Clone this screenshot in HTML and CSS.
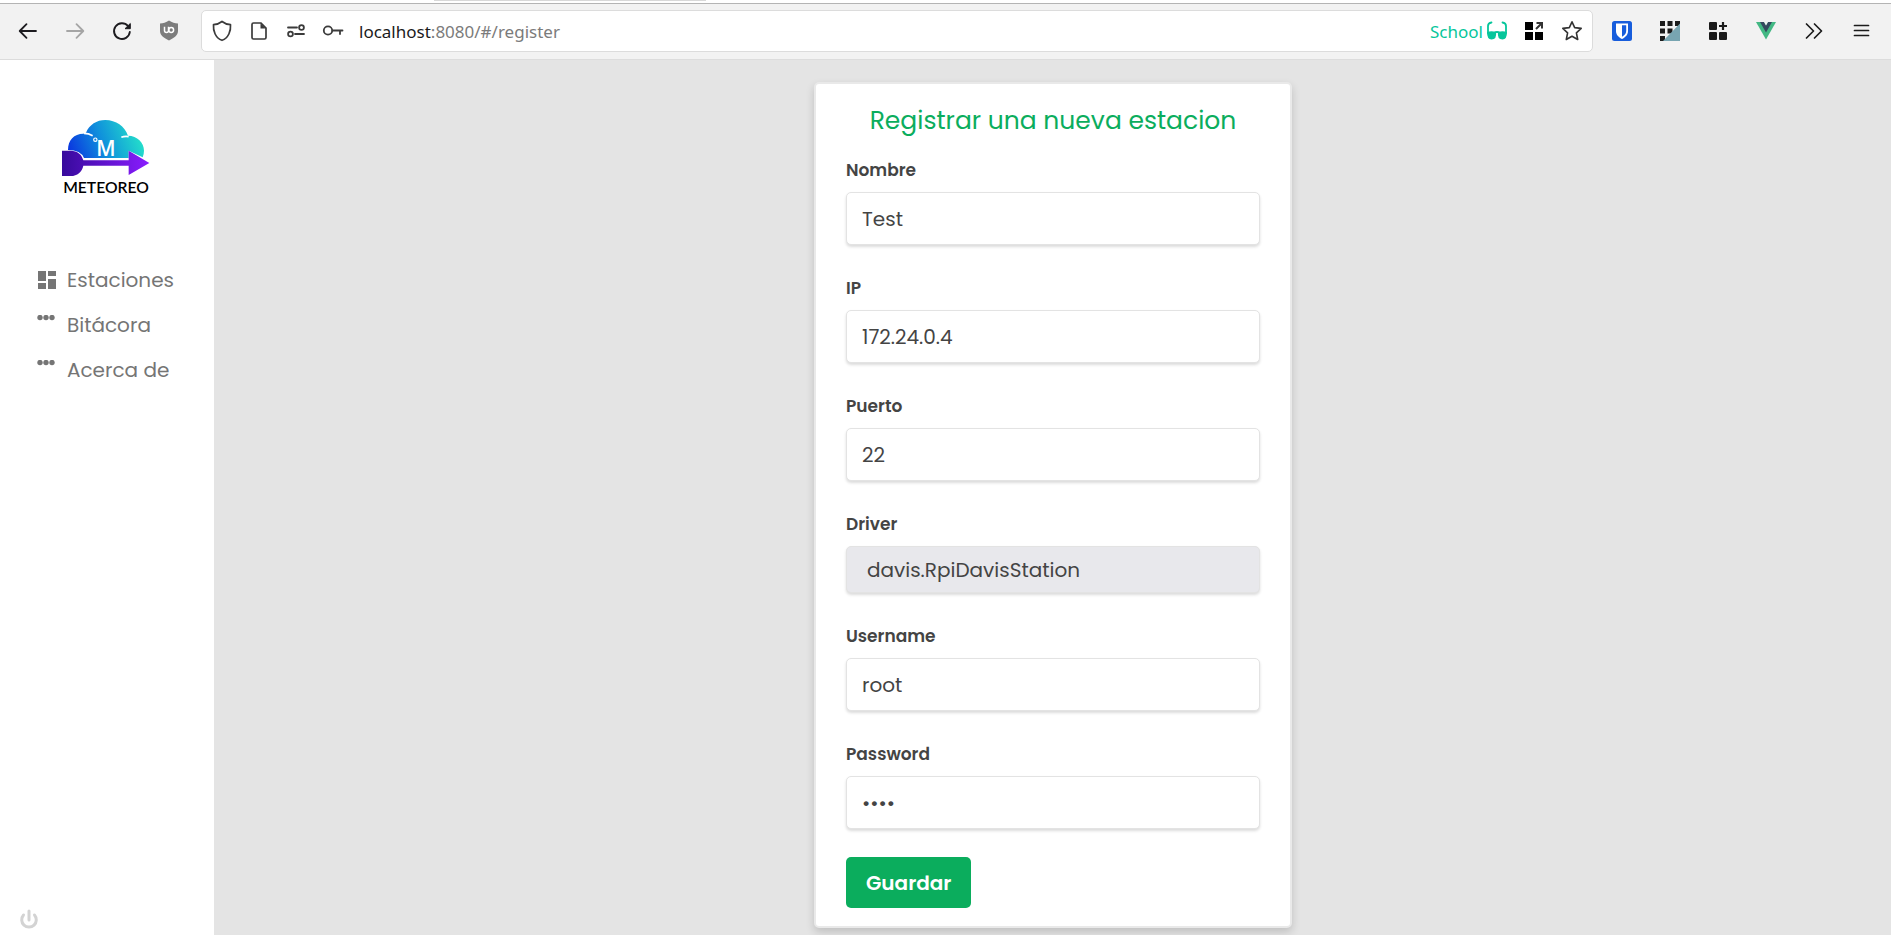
FILE: index.html
```html
<!DOCTYPE html>
<html lang="es">
<head>
<meta charset="utf-8">
<title>Meteoreo - Registrar estacion</title>
<link rel="stylesheet" href="styles.css">
</head>
<body>
<header class="browser">
  <div class="tabstrip"><span class="tab"></span></div>
  <div class="toolbar">
    <div class="nav-buttons">
      <button class="tool" aria-label="Back"><svg viewBox="0 0 24 24"><path d="M20 12H4M10.500 5.200L3.700 12L10.500 18.800" fill="none" stroke="#1c1b1f" stroke-width="1.800" stroke-linecap="round" stroke-linejoin="round"/></svg></button>
      <button class="tool" aria-label="Forward"><svg viewBox="0 0 24 24"><path d="M4 12H20M13.500 5.200L20.300 12L13.500 18.800" fill="none" stroke="#a5a5a5" stroke-width="1.800" stroke-linecap="round" stroke-linejoin="round"/></svg></button>
      <button class="tool" aria-label="Reload"><svg viewBox="0 0 24 24"><path d="M18 7A7.900 7.900 0 1 0 19.800 13" fill="none" stroke="#1c1b1f" stroke-width="1.900" stroke-linecap="round"/><path d="M20.300 4.500V9.700H15Z" fill="#1c1b1f" stroke="#1c1b1f" stroke-linejoin="round"/></svg></button>
      <button class="tool" aria-label="uBlock"><svg viewBox="0 0 24 24"><path d="M12 1.500C9 3.500 6 4.500 3 4.500V12C3 16.500 7 19 12 21.500C17 19 21 16.500 21 12V4.500C18 4.500 15 3.500 12 1.500Z" fill="#7d7d7d"/><path d="M7.500 7.800V11.500A2 2 0 0 0 11.500 11.500V7.800" fill="none" stroke="#fff" stroke-width="1.500"/><circle cx="14.200" cy="11" r="2.400" fill="none" stroke="#fff" stroke-width="1.500"/></svg></button>
    </div>
    <div class="urlbar">
      <div class="url-icons">
        <svg viewBox="0 0 24 24"><path d="M12 2.500C14.500 4.500 17.500 5.500 20.500 5.700C21 12 18.500 19 12 21.300C5.500 19 3 12 3.500 5.700C6.500 5.500 9.500 4.500 12 2.500Z" fill="none" stroke="#3b3b3b" stroke-width="1.700" stroke-linejoin="round"/></svg>
        <svg viewBox="0 0 24 24"><path d="M6.500 4H14L19 9V18.500Q19 20 17.500 20H6.500Q5 20 5 18.500V5.500Q5 4 6.500 4Z" fill="none" stroke="#3b3b3b" stroke-width="1.700"/><path d="M13.500 4V9.500H19Z" fill="#3b3b3b"/></svg>
        <svg viewBox="0 0 24 24"><g fill="none" stroke="#3b3b3b" stroke-width="1.800" stroke-linecap="round"><path d="M4 8.500H13M11 15H20"/><circle cx="17.500" cy="8.500" r="2.400"/><circle cx="6.500" cy="15" r="2.400"/></g></svg>
        <svg viewBox="0 0 24 24"><g fill="none" stroke="#3b3b3b" stroke-width="1.800" stroke-linecap="round"><circle cx="7" cy="11.500" r="4.200"/><path d="M11.500 11.500H21.500M19 11.500V15"/></g></svg>
      </div>
      <div class="url-text"><strong>localhost</strong>:8080/#/register</div>
      <div class="container-tag">School<svg viewBox="0 0 22 20"><path d="M2 12V5Q2 2 5.500 1.500M20 12V5Q20 2 16.500 1.500M8 12Q11 10 14 12" fill="none" stroke="#06c69b" stroke-width="1.800" stroke-linecap="round"/><path d="M1 11Q5.500 9.500 10 11Q11 18.500 5.500 18.500Q1 18.500 1 11ZM21 11Q16.500 9.500 12 11Q11 18.500 16.500 18.500Q21 18.500 21 11Z" fill="#06c69b"/></svg></div>
      <button class="tool" aria-label="Containers"><svg viewBox="0 0 24 24"><path d="M3 3H11V11H3ZM3 13H11V21H3ZM13 13H21V21H13Z"/><path d="M14 10L19.500 4.500M14.500 4H20V9.500" fill="none" stroke="#333" stroke-width="2"/></svg></button>
      <button class="tool" aria-label="Bookmark"><svg viewBox="0 0 24 24"><path d="M12 2.800L14.700 8.600L21.200 9.400L16.400 13.800L17.700 20.500L12 17.200L6.300 20.500L7.600 13.800L2.800 9.400L9.300 8.600Z" fill="none" stroke="#333" stroke-width="1.600" stroke-linejoin="round"/></svg></button>
    </div>
    <div class="extensions">
      <button class="tool" aria-label="Bitwarden"><svg viewBox="0 0 24 24"><rect x="2" y="2" width="20" height="20" rx="2.500" fill="#175ddc"/><path d="M6 4.500H18V12C18 16 15 18.500 12 20C9 18.500 6 16 6 12Z" fill="#fff"/><path d="M12 6.300H16.200V12C16.200 15 14 16.700 12 17.800Z" fill="#175ddc"/></svg></button>
      <button class="tool" aria-label="Grid"><svg viewBox="0 0 24 24"><path d="M2 2h5v5h-5zM9.500 2h5v5h-5zM17 2h5v5h-5zM2 9.500h5v5h-5zM9.500 9.500h5v5h-5zM2 17h5v5h-5z" fill="#1b1b1b"/><path d="M22 4.500V22H5Z" fill="#78a5b1"/></svg></button>
      <button class="tool" aria-label="Add-ons"><svg viewBox="0 0 24 24"><g fill="#1b1b1b"><rect x="3" y="3" width="8" height="8" rx="1"/><rect x="3" y="13" width="8" height="8" rx="1"/><rect x="13" y="13" width="8" height="8" rx="1"/></g><path d="M17 3V11M13 7H21" stroke="#1b1b1b" stroke-width="2.200"/></svg></button>
      <button class="tool" aria-label="Vue"><svg viewBox="0 0 24 24"><path d="M2 3H22L12 20.500Z" fill="#42b883"/><path d="M6 3H10L12 6.500L14 3H18L12 13.500Z" fill="#35495e"/><path d="M10 3H14L12 6.500Z" fill="#f2f2f2"/></svg></button>
      <button class="tool" aria-label="More tools"><svg viewBox="0 0 24 24"><path d="M4.500 5L11.500 12L4.500 19M12.500 5L19.500 12L12.500 19" fill="none" stroke="#1b1b1b" stroke-width="1.700" stroke-linecap="round" stroke-linejoin="round"/></svg></button>
      <button class="tool" aria-label="Menu"><svg viewBox="0 0 24 24"><path d="M4.500 6.500H18.500M4.500 11.500H18.500M4.500 16.500H18.500" stroke="#1b1b1b" stroke-width="1.700" stroke-linecap="round"/></svg></button>
    </div>
  </div>
</header>
<div class="app">
  <aside class="sidebar">
    <svg class="logo" viewBox="-9 0 420 330" role="img" aria-label="Meteoreo">
      <defs>
        <linearGradient id="sky" x1="85" y1="170" x2="290" y2="90" gradientUnits="userSpaceOnUse"><stop offset="0" stop-color="#0a2fe0"/><stop offset=".5" stop-color="#0f8fdc"/><stop offset="1" stop-color="#23dccb"/></linearGradient>
        <linearGradient id="arrow" x1="66" y1="0" x2="328" y2="0" gradientUnits="userSpaceOnUse"><stop offset="0" stop-color="#370a9c"/><stop offset="1" stop-color="#8a1cff"/></linearGradient>
      </defs>
      <path d="M84 150C84 120 102 101 130 101L138 98C148 74 170 60 196 60C228 60 254 79 264 107C292 107 312 128 312 152Q312 162 308 172L266 152V174H132Q122 150 84 150Z" fill="url(#sky)"/>
      <path d="M132 100Q146 100 158 107M244 112Q254 108 266 110" fill="none" stroke="#fff" stroke-width="5"/>
      <path d="M66 152H92C112 152 126 164 130 181H266V152L328 189L266 225V197H130C126 215 112 228 92 228H66Z" fill="url(#arrow)"/>
      <circle cx="166" cy="119" r="5" fill="none" stroke="#fff" stroke-width="3.500"/>
      <text x="198" y="167" class="logo-letter">M</text>
      <text x="198" y="278" class="logo-name">METEOREO</text>
    </svg>
    <nav class="menu">
      <a href="#/" class="menu-item"><svg viewBox="0 0 20 20"><path d="M1 1h8v10h-8zM11 1h8v5h-8zM1 13h8v6h-8zM11 9h8v10h-8z"/></svg>Estaciones</a>
      <a href="#/bitacora" class="menu-item"><svg viewBox="0 0 20 20"><circle cx="3" cy="2.500" r="2.700"/><circle cx="9" cy="2.500" r="2.700"/><circle cx="15" cy="2.500" r="2.700"/></svg>Bitácora</a>
      <a href="#/acerca" class="menu-item"><svg viewBox="0 0 20 20"><circle cx="3" cy="2.500" r="2.700"/><circle cx="9" cy="2.500" r="2.700"/><circle cx="15" cy="2.500" r="2.700"/></svg>Acerca de</a>
    </nav>
    <button class="power" aria-label="Salir"><svg viewBox="0 0 20 22"><path d="M4.500 6A7.300 7.300 0 1 0 15.500 6M10 2V11" fill="none" stroke="#d3d3d3" stroke-width="3" stroke-linecap="round"/></svg></button>
  </aside>
  <main class="content">
    <form class="card">
      <h1 class="title">Registrar una nueva estacion</h1>
      <div class="field"><label for="nombre">Nombre</label><input id="nombre" type="text" value="Test"></div>
      <div class="field"><label for="ip">IP</label><input id="ip" type="text" value="172.24.0.4"></div>
      <div class="field"><label for="puerto">Puerto</label><input id="puerto" type="text" value="22"></div>
      <div class="field"><label for="driver">Driver</label><select id="driver"><option>davis.RpiDavisStation</option></select></div>
      <div class="field"><label for="username">Username</label><input id="username" type="text" value="root"></div>
      <div class="field"><label for="password">Password</label><input id="password" type="password" value="root"></div>
      <button class="save" type="button">Guardar</button>
    </form>
  </main>
</div>
</body>
</html>
```

FILE: styles.css
```css
* { box-sizing: border-box; }
body {
  margin: 0;
  height: 100vh;
  display: flex;
  flex-direction: column;
  overflow: hidden;
  font-family: Poppins, Inter, sans-serif;
  color: #444;
  background: #e4e4e4;
}
button { border: 0; background: none; padding: 0; font: inherit; cursor: pointer; }
svg { display: block; flex: none; }

.browser { font-family: "Noto Sans", sans-serif; background: #f2f2f2; border-bottom: 1px solid #dcdcdc; }
.tabstrip { height: 4px; background: #fff; border-bottom: 1px solid #b4b4b4; padding-left: 434px; }
.tab { display: block; width: 272px; height: 1px; background: #d8d8d8; }
.toolbar { display: flex; align-items: center; padding: 6px 17px 7px 16px; }
.nav-buttons { display: flex; gap: 23px; margin-right: 20px; }
.extensions { display: flex; gap: 24px; margin-left: 17px; }
.tool svg { width: 24px; height: 24px; }
.urlbar {
  flex: 1;
  display: flex;
  align-items: center;
  gap: 14px;
  height: 42px;
  padding: 0 8px;
  background: #fff;
  border: 1px solid #dcdcdc;
  border-radius: 5px;
}
.url-icons { display: flex; gap: 13px; }
.url-icons svg { width: 24px; height: 24px; }
.url-text { flex: 1; font-size: 17px; color: #7b7b7b; }
.url-text strong { font-weight: 400; color: #1b1b1b; }
.container-tag { display: flex; align-items: center; gap: 3px; font-size: 17px; color: #06c69b; }
.container-tag svg { width: 22px; height: 20px; }

.app { flex: 1; display: flex; min-height: 0; }
.sidebar { width: 214px; flex: none; display: flex; flex-direction: column; background: #fff; padding-top: 40px; }
.logo { width: 140px; height: 110px; align-self: center; }
.logo-letter { font: 600 63px "Open Sans", sans-serif; fill: #fff; text-anchor: middle; }
.logo-name { font: 600 47px Lato, sans-serif; fill: #000; text-anchor: middle; }
.menu { display: flex; flex-direction: column; gap: 15px; margin-top: 55px; padding-left: 37px; }
.menu-item { display: flex; align-items: center; gap: 10px; line-height: 30px; font-size: 20px; color: #757575; text-decoration: none; }
.menu-item svg { width: 20px; height: 20px; fill: #757575; }
.power { margin: auto 0 4px 19px; align-self: flex-start; }
.power svg { width: 20px; height: 22px; }

.content { flex: 1; display: flex; justify-content: center; align-items: flex-start; padding: 22px 0 0 1px; }
.card {
  width: 478px;
  padding: 19px 30px 18px;
  background: #fff;
  border: 2px solid #e9e9e9;
  border-radius: 5px;
  box-shadow: 0 4px 8px rgba(0, 0, 0, .16);
}
.title { margin: 0 0 19px; font-size: 25px; line-height: 36px; font-weight: 400; color: #0bad5d; text-align: center; }
.field { display: flex; flex-direction: column; gap: 10px; margin-bottom: 31px; }
.field:last-of-type { margin-bottom: 28px; }
.field label { font-size: 17px; line-height: 24px; font-weight: 600; }
.field input, .field select {
  width: 100%;
  height: 53px;
  padding: 0 15px;
  font: 20px Poppins, Inter, sans-serif;
  color: #444;
  background: #fff;
  border: 1px solid #e3e3e3;
  border-radius: 5px;
  box-shadow: 0 2px 3px rgba(0, 0, 0, .14);
}
.field select { height: 47px; padding: 0 20px; appearance: none; background: #e8e8ec; }
.save { padding: 0 20px; height: 51px; border-radius: 5px; background: #0bad5d; color: #fff; font-size: 20px; font-weight: 600; }
```
